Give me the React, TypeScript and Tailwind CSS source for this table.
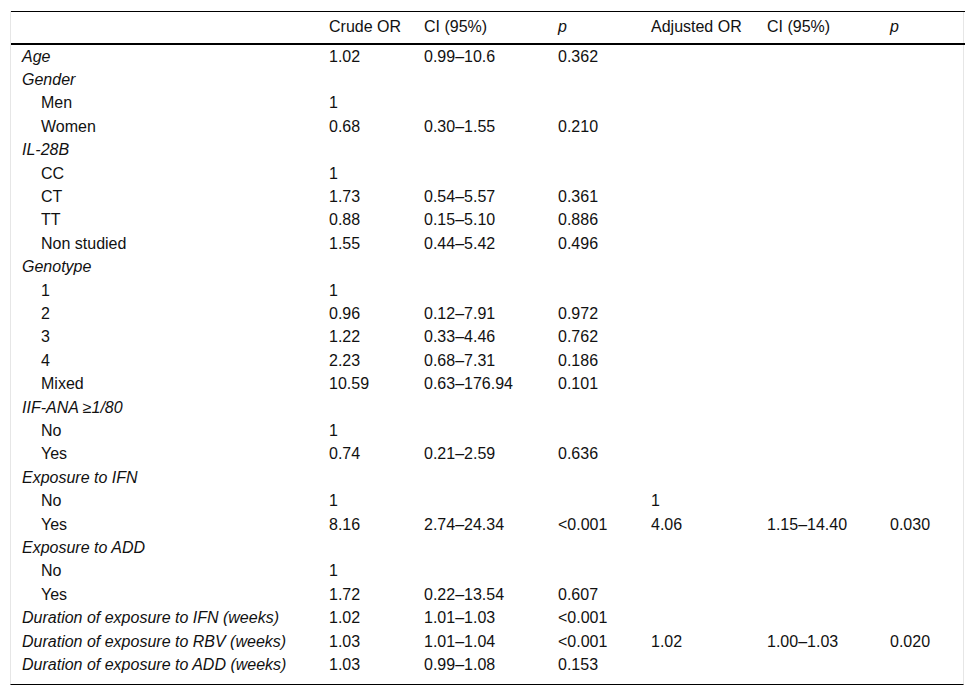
type Row = {
  label: string;
  italic?: boolean;
  sub?: boolean;
  cells?: string[];
};

const rows: Row[] = [
  { label: "Age", italic: true, cells: ["1.02", "0.99–10.6", "0.362"] },
  { label: "Gender", italic: true },
  { label: "Men", sub: true, cells: ["1"] },
  { label: "Women", sub: true, cells: ["0.68", "0.30–1.55", "0.210"] },
  { label: "IL-28B", italic: true },
  { label: "CC", sub: true, cells: ["1"] },
  { label: "CT", sub: true, cells: ["1.73", "0.54–5.57", "0.361"] },
  { label: "TT", sub: true, cells: ["0.88", "0.15–5.10", "0.886"] },
  { label: "Non studied", sub: true, cells: ["1.55", "0.44–5.42", "0.496"] },
  { label: "Genotype", italic: true },
  { label: "1", sub: true, cells: ["1"] },
  { label: "2", sub: true, cells: ["0.96", "0.12–7.91", "0.972"] },
  { label: "3", sub: true, cells: ["1.22", "0.33–4.46", "0.762"] },
  { label: "4", sub: true, cells: ["2.23", "0.68–7.31", "0.186"] },
  { label: "Mixed", sub: true, cells: ["10.59", "0.63–176.94", "0.101"] },
  { label: "IIF-ANA ≥1/80", italic: true },
  { label: "No", sub: true, cells: ["1"] },
  { label: "Yes", sub: true, cells: ["0.74", "0.21–2.59", "0.636"] },
  { label: "Exposure to IFN", italic: true },
  { label: "No", sub: true, cells: ["1", "", "", "1"] },
  {
    label: "Yes",
    sub: true,
    cells: ["8.16", "2.74–24.34", "<0.001", "4.06", "1.15–14.40", "0.030"],
  },
  { label: "Exposure to ADD", italic: true },
  { label: "No", sub: true, cells: ["1"] },
  { label: "Yes", sub: true, cells: ["1.72", "0.22–13.54", "0.607"] },
  {
    label: "Duration of exposure to IFN (weeks)",
    italic: true,
    cells: ["1.02", "1.01–1.03", "<0.001"],
  },
  {
    label: "Duration of exposure to RBV (weeks)",
    italic: true,
    cells: ["1.03", "1.01–1.04", "<0.001", "1.02", "1.00–1.03", "0.020"],
  },
  {
    label: "Duration of exposure to ADD (weeks)",
    italic: true,
    cells: ["1.03", "0.99–1.08", "0.153"],
  },
];

const colWidths = ["w-[307px]", "w-[95px]", "w-[134px]", "w-[93px]", "w-[116px]", "w-[123px]", "w-[86px]"];

const App = () => {
  return (
    <div className="min-h-[697px] bg-white pt-[11px] pl-[10px] font-['Liberation_Sans',Arial,sans-serif] text-[16px] text-[#111]">
      <div className="w-[954px] border-x border-[#e6e6e6] pb-[8px] border-b border-b-black">
        <table className="w-[952px] table-fixed border-collapse">
          <colgroup>
            {colWidths.map((w, i) => (
              <col key={i} className={w} />
            ))}
          </colgroup>
          <thead>
            <tr className="h-[32px] border-t border-black border-b-2 border-b-black">
              <th className="pl-[11px] text-left font-normal"></th>
              <th className="pl-[11px] text-left font-normal">Crude OR</th>
              <th className="pl-[11px] text-left font-normal">CI (95%)</th>
              <th className="pl-[11px] text-left font-normal italic">p</th>
              <th className="pl-[11px] text-left font-normal">Adjusted OR</th>
              <th className="pl-[11px] text-left font-normal">CI (95%)</th>
              <th className="pl-[11px] text-left font-normal italic">p</th>
            </tr>
          </thead>
          <tbody>
            {rows.map((r, i) => (
              <tr key={i} className="h-[23.4px]">
                <td
                  className={`p-0 leading-[23.4px] whitespace-nowrap ${
                    r.sub ? "pl-[30px]" : "pl-[11px]"
                  } ${r.italic ? "italic" : ""}`}
                >
                  {r.label}
                </td>
                {[0, 1, 2, 3, 4, 5].map((c) => (
                  <td key={c} className="p-0 pl-[11px] leading-[23.4px] whitespace-nowrap">
                    {r.cells?.[c] ?? ""}
                  </td>
                ))}
              </tr>
            ))}
          </tbody>
        </table>
      </div>
    </div>
  );
};

export default App;
